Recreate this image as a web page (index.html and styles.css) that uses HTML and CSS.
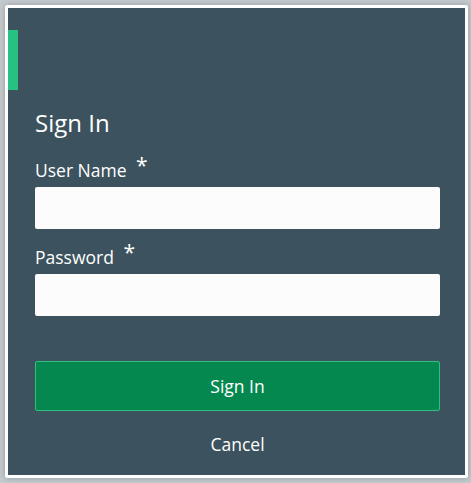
FILE: index.html
```html
<!DOCTYPE html>
<html lang="en">
<head>
    <meta charset="UTF-8">
    <title>Sign In</title>
    <link rel="stylesheet" href="styles.css">
</head>
<body>
    <div class="dialog">
        <div class="accent"></div>
        <div class="dialog-body">
            <h1 class="title">Sign In</h1>
            <form class="login-form">
                <label class="field-label">User Name <span class="req">*</span></label>
                <input class="field-input" type="text">
                <label class="field-label">Password <span class="req">*</span></label>
                <input class="field-input" type="password">
                <button type="button" class="btn-signin">Sign In</button>
                <a href="#" class="cancel-link">Cancel</a>
            </form>
        </div>
    </div>
</body>
</html>
```

FILE: styles.css
```css
/* page */
body {
    margin: 0;
    padding: 0;
    background: #c4cbce;
    font-family: "Open Sans", "Noto Sans", sans-serif;
    color: #fff;
}

.dialog {
    margin: 5px;
    width: 457px;
    height: 467px;
    border: 3px solid #fff;
    border-radius: 2px;
    background-color: #3c525e;
    box-shadow: 0 0 6px rgba(0, 0, 0, 0.25);
}

/* green strip at the top left */
.accent {
    margin-top: 22px;
    width: 10px;
    height: 60px;
    background-color: #26c281;
}

.dialog-body {
    padding: 0 25px 0 27px;
}

.title {
    margin: 18px 0 0;
    font-size: 24px;
    font-weight: normal;
    line-height: 30px;
}

.login-form {
    display: flex;
    flex-direction: column;
    margin-top: 4px;
}

.field-label {
    margin-top: 16px;
    font-size: 17.5px;
    line-height: 24px;
    height: 29px;
}

.req {
    font-size: 21px;
    vertical-align: top;
    position: relative;
    top: -5px;
    margin-left: 5px;
}

.field-input {
    box-sizing: border-box;
    height: 42px;
    border: 0;
    border-radius: 2px;
    background: #fcfcfc;
    margin: 0;
}

.btn-signin {
    margin-top: 45px;
    height: 50px;
    border: 1px solid #2fbf7f;
    border-radius: 2px;
    background-color: #05884f;
    color: #fff;
    font-family: inherit;
    font-size: 17.5px;
    cursor: pointer;
}

.cancel-link {
    margin-top: 21px;
    text-align: center;
    color: #fff;
    text-decoration: none;
    font-size: 17.5px;
    line-height: 24px;
}
```
